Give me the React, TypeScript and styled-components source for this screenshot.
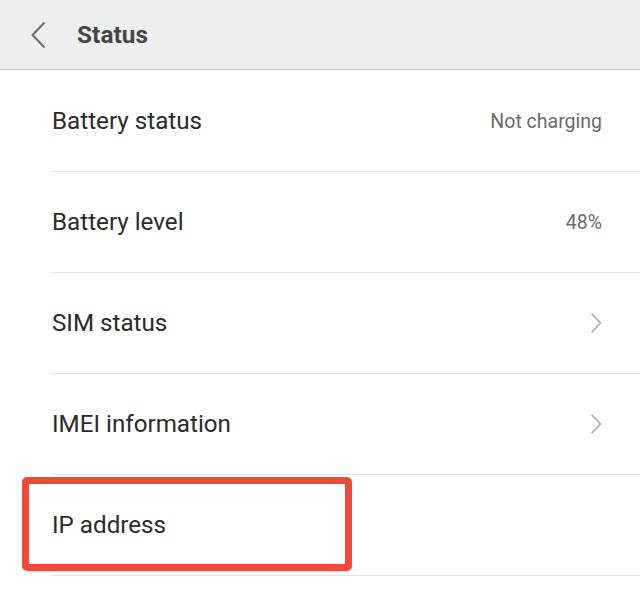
import React from "react";
import styled, { createGlobalStyle } from "styled-components";

const Global = createGlobalStyle`
  html, body { margin: 0; padding: 0; background: #ffffff; }
  body { font-family: Roboto, "Noto Sans", sans-serif; -webkit-font-smoothing: antialiased; }
`;

const Page = styled.div`
  width: 640px;
  height: 590px;
  overflow: hidden;
  background: #ffffff;
`;

const Header = styled.header`
  height: 70px;
  background: #edeeee;
  border-bottom: 1px solid #c9cbcb;
  display: flex;
  align-items: center;
  padding-left: 29px;
  gap: 29px;
  box-sizing: border-box;
`;

const BackButton = styled.div`
  width: 19px;
  height: 28px;
  display: flex;
  align-items: center;
  justify-content: center;
`;

const Title = styled.h1`
  margin: 0;
  font-size: 24.3px;
  font-weight: 700;
  color: #454545;
  letter-spacing: 0.1px;
`;

const List = styled.div`
  display: flex;
  flex-direction: column;
  padding-left: 51px;
  padding-top: 1px;
`;

const Row = styled.div`
  position: relative;
  height: 101px;
  border-bottom: 1px solid #e3e3e3;
  box-sizing: border-box;
  display: flex;
  align-items: center;
  justify-content: space-between;
  padding-right: 38px;
`;

const Label = styled.span`
  font-size: 24.2px;
  color: #2b2b2b;
  padding-left: 1px;
`;

const Value = styled.span`
  font-size: 19.5px;
  color: #6a6a6a;
`;

const Highlight = styled.div`
  position: absolute;
  left: -29px;
  top: 2px;
  width: 316px;
  height: 80px;
  border: 7px solid #f4483a;
  border-radius: 5px;
  pointer-events: none;
`;

const Chevron = () => (
  <svg width="12" height="22" viewBox="0 0 12 22">
    <path d="M1.5 1.5 L10.5 11 L1.5 20.5" fill="none" stroke="#a9a9a9" strokeWidth="1.6" />
  </svg>
);

const BackIcon = () => (
  <svg width="17" height="28" viewBox="0 0 17 28">
    <path d="M14.5 1.5 L2.5 14 L14.5 26.5" fill="none" stroke="#6b6b6b" strokeWidth="2" />
  </svg>
);

type Item = { label: string; value?: string; chevron?: boolean; highlight?: boolean };

const items: Item[] = [
  { label: "Battery status", value: "Not charging" },
  { label: "Battery level", value: "48%" },
  { label: "SIM status", chevron: true },
  { label: "IMEI information", chevron: true },
  { label: "IP address", highlight: true },
];

export default function App() {
  return (
    <Page>
      <Global />
      <Header>
        <BackButton>
          <BackIcon />
        </BackButton>
        <Title>Status</Title>
      </Header>
      <List>
        {items.map((it) => (
          <Row key={it.label}>
            <Label>{it.label}</Label>
            {it.value && <Value>{it.value}</Value>}
            {it.chevron && <Chevron />}
            {it.highlight && <Highlight />}
          </Row>
        ))}
      </List>
    </Page>
  );
}
